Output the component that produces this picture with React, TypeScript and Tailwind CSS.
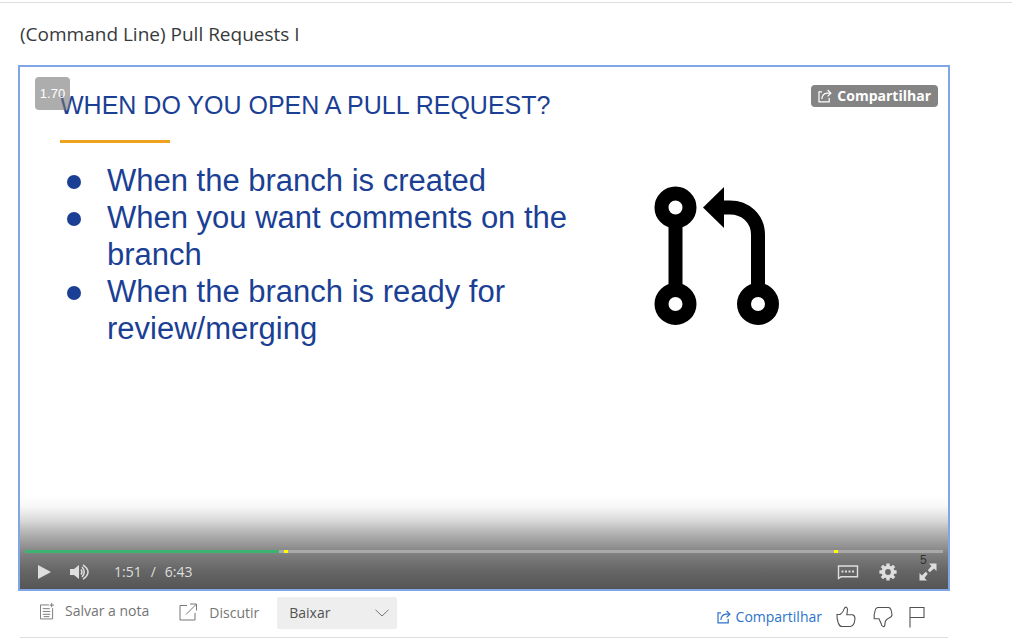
import React from "react";

function ShareIcon({ className }: { className?: string }) {
  return (
    <svg viewBox="0 0 14 14" className={className} fill="none" stroke="currentColor" strokeWidth="1.2" aria-hidden="true">
      <path d="M4 2.8H1V12.8H11.2V9" />
      <path d="M3.8 10C4.2 6.5 6.3 4.4 9 4.2H12.6" />
      <path d="M9.6 1L12.9 4.2L9.6 7.4" />
    </svg>
  );
}

function PullRequestIcon() {
  return (
    <svg viewBox="0 0 126 140" className="h-[140px] w-[126px]" aria-hidden="true">
      <g fill="none" stroke="#000" strokeWidth="14">
        <circle cx="21.5" cy="21.5" r="14" />
        <circle cx="21.5" cy="118" r="14" />
        <circle cx="104" cy="118" r="14" />
        <path d="M21.5 35V104M104 104V49C104 32 91 21.500 76 21.500H66" />
      </g>
      <path d="M49 21.500L70 1V42Z" />
    </svg>
  );
}

const bullets = [
  "When the branch is created",
  "When you want comments on the branch",
  "When the branch is ready for review/merging",
];

function Slide() {
  return (
    <div className="flex items-start justify-between pl-10 pr-[168px] pt-[22px] font-['Liberation_Sans',sans-serif] text-[#1b3f94]">
      <div>
        <h2 className="whitespace-nowrap text-[25px] leading-8">WHEN DO YOU OPEN A PULL REQUEST?</h2>
        <div className="mt-[19px] h-[3px] w-[110px] bg-[#efa31d]" />
        <ul className="mt-[19px] w-[530px] text-[31px] leading-[37px]">
          {bullets.map((b) => (
            <li key={b} className="flex gap-[26px]">
              <span className="ml-[7px] mt-[13px] size-[14px] shrink-0 rounded-full bg-[#1b3f94]" />
              <span>{b}</span>
            </li>
          ))}
        </ul>
      </div>
      <div className="shrink-0 pt-[97px]">
        <PullRequestIcon />
      </div>
    </div>
  );
}

function Controls() {
  return (
    <div className="mt-auto flex flex-col bg-[linear-gradient(to_bottom,#fff_0%,#f6f6f6_12%,#dadada_26%,#b8b8b8_38%,#909090_55%,#7c7c7c_64%,#666_80%,#555_100%)] px-[5px] pt-[54px] text-[#dedede]">
      <div className="relative h-[3px] bg-[#a9a9a9]" role="progressbar" aria-label="Progresso" aria-valuenow={111} aria-valuemax={403}>
        <div className="h-full w-[27.700%] bg-[#3cb371]" />
        <span className="absolute left-[28.200%] top-0 h-[3px] w-1 bg-[#ff0]" />
        <span className="absolute left-[88.100%] top-0 h-[3px] w-1 bg-[#ff0]" />
      </div>
      <div className="flex h-9 items-center pl-[13px] pr-[6px] pt-0.5">
        <button aria-label="Reproduzir">
          <svg viewBox="0 0 14 14" className="h-[14px] w-[14px]" fill="currentColor"><path d="M0 0L13 7L0 14Z" /></svg>
        </button>
        <button aria-label="Volume" className="ml-[18px]">
          <svg viewBox="0 0 20 16" className="h-4 w-5" fill="none" stroke="currentColor" strokeWidth="1.500">
            <path d="M0 5H4L9 1V15L4 11H0Z" fill="currentColor" stroke="none" />
            <path d="M11 5.500Q13 8 11 10.500M12 3Q16.500 8 12 13M13 .8Q23 8 13 15.200" />
          </svg>
        </button>
        <span className="ml-6 flex gap-[9px] text-sm"><span>1:51</span><span>/</span><span>6:43</span></span>
        <button aria-label="Legendas" className="ml-auto">
          <svg viewBox="0 0 22 16" className="h-4 w-[22px]" fill="none" stroke="currentColor" strokeWidth="1.400">
            <path d="M1.500 14.500V2H20.500V12.800H4Z" />
            <path d="M4.500 7.500H18" strokeWidth="2" strokeDasharray="2 1.500" />
          </svg>
        </button>
        <button aria-label="Configurações" className="ml-5">
          <svg viewBox="0 0 18 18" className="size-[18px]" fill="none" stroke="currentColor">
            <circle cx="9" cy="9" r="4.700" strokeWidth="3.600" />
            <path d="M9 .4V4M9 14V17.600M.4 9H4M14 9H17.600M2.900 2.900L5 5M13 13L15.100 15.100M2.900 15.100L5 13M13 5L15.100 2.900" strokeWidth="3.400" />
          </svg>
        </button>
        <button aria-label="Tela cheia" className="relative ml-[22px]">
          <svg viewBox="0 0 18 18" className="size-[18px]" fill="currentColor">
            <path d="M10 .5H17.500V8L15 5.500L10.800 9.200L8.800 7.200L12.500 3ZM.5 10L3 12.500L6.700 8.800L8.700 10.800L5.500 15L8 17.500H.5Z" />
          </svg>
          <span className="absolute -top-[11px] left-px font-['Liberation_Sans',sans-serif] text-xs leading-4 text-[#333]">5</span>
        </button>
      </div>
    </div>
  );
}

function Player() {
  return (
    <section aria-label="Vídeo" className="relative flex aspect-[932/526] w-full flex-col border-2 border-[#80a6e5] bg-white">
      <Slide />
      <Controls />
      <span className="absolute left-[15px] top-[10px] flex h-[33px] w-[35px] items-center justify-center rounded bg-[#777]/60 font-['Liberation_Sans',sans-serif] text-[13px] text-white">
        1.70
      </span>
      <button className="absolute right-[10px] top-[18px] flex h-[22px] items-center gap-[5px] rounded bg-[#848484] px-[7px] text-sm font-bold text-white">
        <ShareIcon className="size-[14px]" />
        Compartilhar
      </button>
    </section>
  );
}

function Actions() {
  return (
    <div className="mx-0.5 flex h-[47px] items-start border-b border-[#ddd] pt-[6px] text-sm text-[#757575]">
      <button className="ml-5 flex h-[28px] items-center gap-[11px]">
        <svg viewBox="0 0 15 18" className="h-[18px] w-[14px]" fill="none" stroke="currentColor" aria-hidden="true">
          <path d="M9.500 2.500H.5V17.500H13.500V6M3 6.500H10.500M3 9.500H11M3 12.500H11M4 15H10M12.500 .5V5M10.200 2.700H15" />
        </svg>
        Salvar a nota
      </button>
      <button className="ml-[30px] flex h-8 items-center gap-3">
        <svg viewBox="0 0 18 18" className="mb-[3px] size-[18px]" fill="none" stroke="currentColor" aria-hidden="true">
          <path d="M8 2.500H1V17H16V10M7 11.500L17 1.500M11 1H17.500V7.500" />
        </svg>
        Discutir
      </button>
      <div className="relative ml-[18px] flex h-8 items-center">
        <select aria-label="Baixar" className="h-8 w-[120px] appearance-none rounded-xs bg-[#eee] px-3 text-sm text-[#525252]">
          <option>Baixar</option>
        </select>
        <svg viewBox="0 0 14 8" className="pointer-events-none absolute right-2 h-2 w-[14px]" fill="none" stroke="#757575" aria-hidden="true">
          <path d="M.5 .8L7 7L13.500 .8" />
        </svg>
      </div>
      <div className="ml-auto mr-[22px] flex h-10 items-center text-[#525252]">
        <a href="#compartilhar" className="flex items-center gap-[5px] text-[#2a73cc]">
          <ShareIcon className="size-[14px]" />
          Compartilhar
        </a>
        <button aria-label="Gostei" className="ml-[14px]">
          <svg viewBox="0 0 20 22" className="h-[22px] w-5" fill="none" stroke="currentColor" strokeWidth="1.100">
            <path d="M1 8.500H4Q7.500 6 8.300 2.500Q9 1 10.500 1.200Q12 2.500 11.300 5.500L10.800 8.800H16.500Q19 9.500 19 13L18 17.500Q16.500 20.500 14.500 20.500H6Q3.500 20.500 2.300 17L1.200 13Z" />
          </svg>
        </button>
        <button aria-label="Não gostei" className="ml-[17px]">
          <svg viewBox="0 0 20 22" className="h-[22px] w-5" fill="none" stroke="currentColor" strokeWidth="1.100">
            <path d="M4.500 1.500H15.500Q17.500 1.500 18.200 4.500L19 8.500Q19 11 16 12Q11.800 14 12 17.500Q12 20.500 10.500 20.800Q8.500 20.500 8.300 18L6 12.800H1.200V8.500L2 5Q2.500 2 4.500 1.500Z" />
          </svg>
        </button>
        <button aria-label="Sinalizar" className="ml-[15px]">
          <svg viewBox="0 0 18 22" className="h-[22px] w-[18px]" fill="none" stroke="currentColor" strokeWidth="1.100">
            <path d="M2 21.500V1.500H16V11.500H2" />
          </svg>
        </button>
      </div>
    </div>
  );
}

export default function App() {
  return (
    <main className="pt-0.5 font-['Open_Sans','Noto_Sans',sans-serif]">
      <div className="border-t border-[#ddd] pl-[18px] pr-[62px]">
        <h1 className="ml-0.5 py-[17px] text-[19px] leading-7 text-[#373a3c]">(Command Line) Pull Requests I</h1>
        <Player />
        <Actions />
      </div>
    </main>
  );
}
